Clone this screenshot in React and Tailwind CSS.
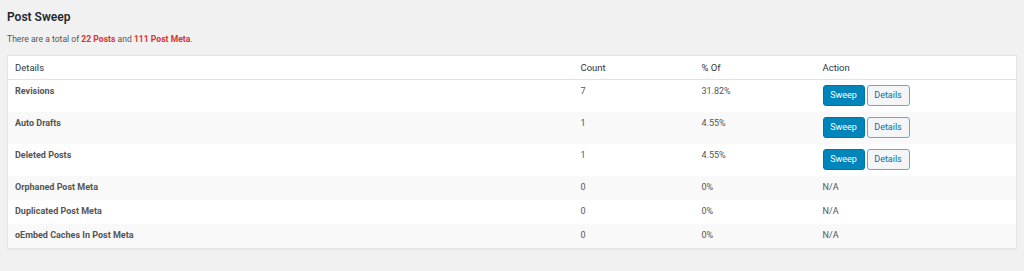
import React from "react";

const rows = [
  { name: "Revisions", count: "7", pct: "31.82%", action: true },
  { name: "Auto Drafts", count: "1", pct: "4.55%", action: true },
  { name: "Deleted Posts", count: "1", pct: "4.55%", action: true },
  { name: "Orphaned Post Meta", count: "0", pct: "0%", action: false },
  { name: "Duplicated Post Meta", count: "0", pct: "0%", action: false },
  { name: "oEmbed Caches In Post Meta", count: "0", pct: "0%", action: false },
];

export default function App() {
  return (
    <div
      className="h-[271px] w-[1024px] bg-[#f1f1f1] pl-[7px] pr-[7px] pt-[9px] text-[#555]"
      style={{ fontFamily: "Roboto, 'Liberation Sans', sans-serif" }}
    >
      <h1 className="text-[12px] font-semibold leading-[16px] text-[#23282d]">Post Sweep</h1>

      <p className="mt-[8px] text-[8.6px] leading-[12px]">
        There are a total of <strong className="font-bold text-[#dc3232]">22 Posts</strong> and{" "}
        <strong className="font-bold text-[#dc3232]">111 Post Meta</strong>.
      </p>

      <table className="mt-[10px] w-[1010px] table-fixed border-collapse border border-[#e5e5e5] bg-white text-[9px] shadow-[0_1px_1px_rgba(0,0,0,0.04)]">
        <colgroup>
          <col className="w-[566px]" />
          <col className="w-[121px]" />
          <col className="w-[121px]" />
          <col />
        </colgroup>
        <thead>
          <tr className="border-b border-[#e1e1e1]">
            <th className="px-[7px] pb-[5px] pt-[6px] text-left align-top text-[9.5px] font-normal leading-[12px] text-[#32373c]">Details</th>
            <th className="px-[7px] pb-[5px] pt-[6px] text-left align-top text-[9.5px] font-normal leading-[12px] text-[#32373c]">Count</th>
            <th className="px-[7px] pb-[5px] pt-[6px] text-left align-top text-[9.5px] font-normal leading-[12px] text-[#32373c]">% Of</th>
            <th className="px-[7px] pb-[5px] pt-[6px] text-left align-top text-[9.5px] font-normal leading-[12px] text-[#32373c]">Action</th>
          </tr>
        </thead>
        <tbody>
          {rows.map((r, i) => (
            <tr key={r.name} className={i % 2 === 1 ? "bg-[#f9f9f9]" : "bg-white"}>
              <td className="px-[7px] pb-[6px] pt-[5px] align-top font-bold leading-[13px]">{r.name}</td>
              <td className="px-[7px] pb-[6px] pt-[5px] align-top leading-[13px]">{r.count}</td>
              <td className="px-[7px] pb-[6px] pt-[5px] align-top leading-[13px]">{r.pct}</td>
              <td className="px-[7px] pb-[6px] pt-[5px] align-top leading-[13px]">
                {r.action ? (
                  <div className="flex gap-[2px]">
                    <button className="h-[21px] w-[42px] rounded-[3px] border border-[#0073aa] bg-[#0085ba] text-[9px] text-white">
                      Sweep
                    </button>
                    <button className="h-[21px] w-[43px] rounded-[3px] border border-[#6ea7c6] bg-[#f3f5f6] text-[9px] text-[#0073aa]">
                      Details
                    </button>
                  </div>
                ) : (
                  "N/A"
                )}
              </td>
            </tr>
          ))}
        </tbody>
      </table>
    </div>
  );
}
